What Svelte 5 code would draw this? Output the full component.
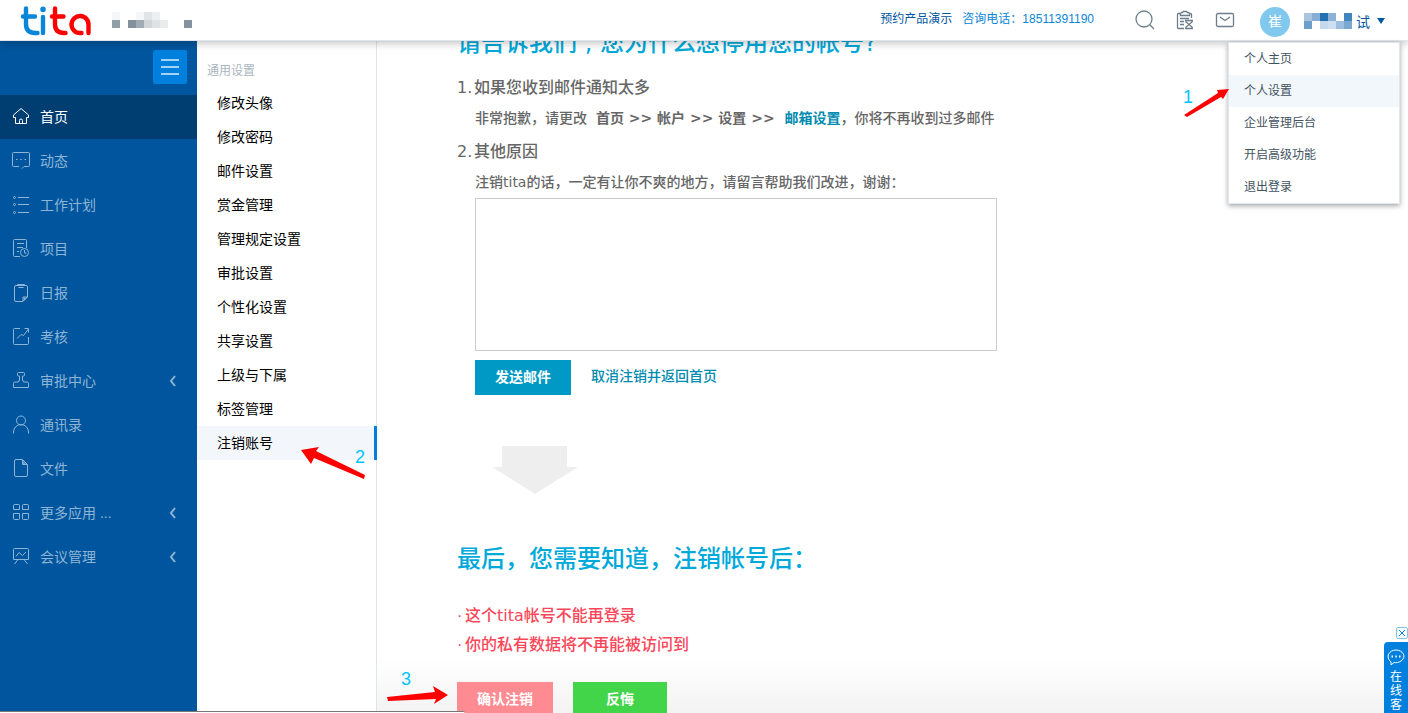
<script>
  // left navigation, icons are stroked paths in a 20x20 box
  const nav = [
    { label: '首页', active: true, icon: 'M10 1.5 2.5 8v2.5h2v6h11v-6h2V8zM8.5 16.5v-3a1.5 1.5 0 0 1 3 0v3' },
    { label: '动态', icon: 'M8 15.5H2.5a1 1 0 0 1-1-1v-12a1 1 0 0 1 1-1h15a1 1 0 0 1 1 1v12a1 1 0 0 1-1 1H13l-2 2M5 8.5h1.5M9.3 8.5h1.5M13.5 8.5H15' },
    { label: '工作计划', icon: 'M2.5 2.5a1 1 0 1 0 2 0 1 1 0 1 0-2 0M2.5 9.5a1 1 0 1 0 2 0 1 1 0 1 0-2 0M2.5 17.5a1 1 0 1 0 2 0 1 1 0 1 0-2 0M7 2.5h11M7 9.5h11M7 17.5h11' },
    { label: '项目', icon: 'M9 17.5H3.5a1 1 0 0 1-1-1v-15a1 1 0 0 1 1-1h11a1 1 0 0 1 1 1V9M6 4.5h7M6 8.5h6M6 12.5h2M9.5 13.5a4 4 0 1 0 8 0 4 4 0 1 0-8 0M13.5 11v3h2' },
    { label: '日报', icon: 'M12 18.5H5a1.5 1.5 0 0 1-1.5-1.5V4A1.5 1.5 0 0 1 5 2.5h10A1.5 1.5 0 0 1 16.5 4v10zM6.5 2.5v-1h7v1M7.5 4.5h5M12 18v-4h4zM13 15h1v1h-1z' },
    { label: '考核', icon: 'M9 1.5H3.5a1 1 0 0 0-1 1v14a1 1 0 0 0 1 1h13a1 1 0 0 0 1-1V10M6 11.5l4-4 2.500 1 5-6.500M13.5 1.5h4v4' },
    { label: '审批中心', more: true, icon: 'M8.5 9.500V5h-1a1 1 0 0 1-1-1V2.500a1 1 0 0 1 1-1h5a1 1 0 0 1 1 1V4a1 1 0 0 1-1 1h-1v4.500M8.500 8.500l-1 2.500H4a1.500 1.500 0 0 0-1.500 1.500v4h15v-4A1.500 1.500 0 0 0 16 11h-3.500l-1-2.500' },
    { label: '通讯录', icon: 'M5.5 5.5a4.500 4.500 0 1 0 9 0 4.500 4.500 0 1 0-9 0M2.5 18.5V17a7.500 7.500 0 0 1 15 0v1.5' },
    { label: '文件', icon: 'M11.5.5H5A1.5 1.5 0 0 0 3.5 2v14A1.5 1.5 0 0 0 5 17.5h10a1.5 1.5 0 0 0 1.5-1.5V5.5zM11.5 1v4.5H16zM12.5 3.5v1h1z' },
    { label: '更多应用 ...', more: true, icon: 'M3.5 1.5h4a1 1 0 0 1 1 1v4h-6v-4a1 1 0 0 1 1-1zM12.5 1.5h4a1 1 0 0 1 1 1v4h-6v-4a1 1 0 0 1 1-1zM2.5 10.5h6v5a1 1 0 0 1-1 1h-4a1 1 0 0 1-1-1zM11.5 10.5h6v5a1 1 0 0 1-1 1h-4a1 1 0 0 1-1-1z' },
    { label: '会议管理', more: true, icon: 'M3.5 1.5h13a1 1 0 0 1 1 1v10h-15v-10a1 1 0 0 1 1-1zM5 9.5l3-4 3.5 3L15 5M7 12.5 3.5 17M13 12.5l3.5 4.5' }
  ];

  const settings = ['修改头像', '修改密码', '邮件设置', '赏金管理', '管理规定设置', '审批设置', '个性化设置', '共享设置', '上级与下属', '标签管理', '注销账号'];
  const userMenu = ['个人主页', '个人设置', '企业管理后台', '开启高级功能', '退出登录'];

  // masked names: [column, row, colour]
  const company = [
    [0, 0, '#f5f6f7'], [3, 0, '#f4f6f7'], [4, 0, '#e0e4e7'], [5, 0, '#eceff1'],
    [0, 1, '#909ea7'], [2, 1, '#82919b'], [3, 1, '#a0abb3'], [4, 1, '#d0d6da'],
    [5, 1, '#dee2e5'], [6, 1, '#e9ecef'], [9, 1, '#84939d']
  ];
  const username = [
    [0, 0, '#a9c5e0'], [1, 0, '#8aaed3'], [2, 0, '#226fb1'], [3, 0, '#8db2d5'], [5, 0, '#4284bc'],
    [0, 1, '#6d9fca'], [2, 1, '#c4d9eb'], [3, 1, '#cddff0'], [4, 1, '#9dbfdd'], [5, 1, '#7ba8d0']
  ];
</script>

<div class="app">
  <header>
    <svg class="logo" width="72" height="32" viewBox="0 0 72 32" fill="none" stroke-width="4.4" stroke-linecap="round">
      <g stroke="#0a86d8">
        <path d="M6 4.5V20q0 9 9 9h2.5M3 12.5h12M23 13v16" />
        <path d="M23 5.3v.2" stroke-width="5.5" />
      </g>
      <path stroke="#f00" d="M35 4.5V20q0 9 9 9h1.5M32 12.5h11.5M68.5 29v-8a8.5 8.5 0 1 0-8.5 8h1.500" />
    </svg>
    <svg class="company" width="80" height="16">
      {#each company as [x, y, fill]}<rect x={x * 8} y={y * 8} width="8" height="8" {fill} />{/each}
    </svg>
    <div class="contact">
      <a class="demo" href="#demo">预约产品演示</a>
      <span>咨询电话：18511391190</span>
    </div>
    <div class="tools">
      <button aria-label="搜索">
        <svg width="20" height="20" viewBox="0 0 20 20"><circle cx="9" cy="9" r="8" /><path d="M14.500 14.500l4.500 4.500" /></svg>
      </button>
      <button aria-label="任务">
        <svg width="20" height="20" viewBox="0 0 20 20"><path d="M9 18.5H3.5a1 1 0 0 1-1-1v-13a1 1 0 0 1 1-1H5M14 3.500h1.500a1 1 0 0 1 1 1V8M5.500 5.500v-2l1-1h1l1-1h3l1 1h1l1 1v2zM5 8.500h9M5 11.500h4M5 14.500h4M10 10.500h8M10 18.500h8M11 10.500v1.500l3 2.500 3-2.500v-1.500M11 18.500V17l3-2.500 3 2.500v1.500" /></svg>
      </button>
      <button aria-label="邮件">
        <svg width="20" height="20" viewBox="0 0 20 20"><rect x="1.5" y="3.5" width="17" height="13" rx="1.5" /><path d="M5 7l5 3.500L15 7" /></svg>
      </button>
    </div>
    <div class="user">
      <span class="avatar">崔</span>
      <button class="name">
        <svg width="48" height="16">
          {#each username as [x, y, fill]}<rect x={x * 8} y={y * 8} width="8" height="8" {fill} />{/each}
        </svg>
        <span>试</span>
        <i class="caret"></i>
      </button>
      <div class="menu">
        {#each userMenu as item, i}
          <a href="#menu" class:hover={i === 1}>{item}</a>
        {/each}
        <div class="note one">
          <b>1</b>
          <svg width="46" height="30" viewBox="0 0 46 30"><path d="M33 2 45 1 39 11 37 9 3 29 0 27 34 5z" /></svg>
        </div>
      </div>
    </div>
  </header>

  <div class="body">
    <aside class="side">
      <button class="toggle" aria-label="收起菜单"><i></i><i></i><i></i></button>
      <nav>
        {#each nav as item}
          <a href="#nav" class:active={item.active}>
            <svg width="20" height="20" viewBox="0 0 20 20"><path d={item.icon} /></svg>
            <span>{item.label}</span>
            {#if item.more}
              <svg class="chevron" width="8" height="12" viewBox="0 0 8 12"><path d="M6 1 2 6l4 5" /></svg>
            {/if}
          </a>
        {/each}
      </nav>
    </aside>

    <aside class="settings">
      <h4>通用设置</h4>
      {#each settings as item, i}
        <a href="#settings" class:current={i === settings.length - 1}>
          {item}
          {#if i === settings.length - 1}
            <span class="note two">
              <b>2</b>
              <svg width="66" height="34" viewBox="0 0 66 34"><path d="M0 4 18 1 15 5 64 29 63 33 13 12 10 18z" /></svg>
            </span>
          {/if}
        </a>
      {/each}
    </aside>

    <main>
      <div class="content">
        <h2>请告诉我们 , 您为什么想停用您的帐号?</h2>
        <h3><span>1.</span>如果您收到邮件通知太多</h3>
        <p>非常抱歉，请更改 &nbsp;<strong>首页 &gt;&gt; 帐户 &gt;&gt; 设置 &gt;&gt; &nbsp;<a href="#mail">邮箱设置</a></strong>，你将不再收到过多邮件</p>
        <h3><span>2.</span>其他原因</h3>
        <p><label for="reason">注销tita的话，一定有让你不爽的地方，请留言帮助我们改进，谢谢：</label></p>
        <textarea id="reason"></textarea>
        <div class="actions send">
          <button class="blue">发送邮件</button>
          <a href="#home">取消注销并返回首页</a>
        </div>
        <svg class="down" width="86" height="48" viewBox="0 0 86 48"><path d="M10 0h65v21h11L43 48 0 21h10z" /></svg>
        <h2>最后，您需要知道，注销帐号后：</h2>
        <ul>
          <li>这个tita帐号不能再登录</li>
          <li>你的私有数据将不再能被访问到</li>
        </ul>
        <div class="actions final">
          <button class="red">确认注销</button>
          <button class="green">反悔</button>
          <div class="note three">
            <b>3</b>
            <svg width="62" height="20" viewBox="0 0 62 20"><path d="M0 12 48 7 46 1 61 10 47 19 49 14 1 16z" /></svg>
          </div>
        </div>
      </div>
    </main>
  </div>

  <div class="chat">
    <button class="close" aria-label="关闭">
      <svg width="10" height="10" viewBox="0 0 10 10"><path d="M2 2l6 6M8 2 2 8" /></svg>
    </button>
    <button class="talk">
      <svg width="18" height="18" viewBox="0 0 18 18"><path d="M4 17v-3C-2 9 2 2 9 2s11 7 5 11c-2 1.5-5 2-7 1.5z" /><path class="dots" d="M4.5 8.5H6M8.3 8.5h1.5M12 8.5h1.5" /></svg>
      <span>在线客</span>
    </button>
  </div>
  <div class="statusbar"></div>
</div>

<style>
  :global(body) {
    margin: 0;
    background: #fff;
  }
  .app {
    height: 100vh;
    display: flex;
    flex-direction: column;
    overflow: hidden;
    font-family: "Liberation Sans", "Noto Sans CJK SC", sans-serif;
    font-size: 14px;
  }
  a {
    text-decoration: none;
  }
  button {
    border: 0;
    padding: 0;
    background: none;
    font: inherit;
    cursor: pointer;
  }
  svg {
    display: block;
    flex: none;
  }

  header {
    position: relative;
    z-index: 2;
    flex: none;
    height: 40px;
    display: flex;
    align-items: center;
    padding: 0 23px 0 20px;
    background: #fff;
    border-bottom: 1px solid #dfe6ee;
    box-shadow: 0 2px 8px rgba(0, 0, 0, 0.25);
  }
  .company {
    margin-left: 20px;
  }
  .contact {
    margin-left: auto;
    display: flex;
    gap: 10px;
    font-size: 12px;
    line-height: 16px;
    padding-bottom: 2px;
    color: #0a86d8;
  }
  .demo {
    color: #00569f;
  }
  .tools {
    display: flex;
    gap: 20px;
    margin: 0 25px 0 41px;
  }
  .tools svg {
    fill: none;
    stroke: #6c7e8a;
    stroke-width: 1.3;
  }
  .user {
    display: flex;
    align-items: center;
    gap: 14px;
  }
  .avatar {
    width: 30px;
    height: 30px;
    margin-top: 3px;
    border-radius: 50%;
    background: #80c8ed;
    color: #fff;
    line-height: 28px;
    text-align: center;
  }
  .name {
    display: flex;
    align-items: center;
    gap: 4px;
    padding-top: 2px;
    color: #00569f;
  }
  .caret {
    margin-left: 3px;
    border: 4px solid transparent;
    border-top: 6px solid #00569f;
    border-bottom: 0;
  }
  .menu {
    position: absolute;
    top: 42px;
    right: 8px;
    width: 170px;
    background: #fff;
    border: 1px solid #dfe6ee;
    box-shadow: 0 2px 5px rgba(0, 0, 0, 0.35);
  }
  .menu a {
    display: block;
    padding-left: 15px;
    font-size: 12px;
    line-height: 32px;
    color: #43525f;
  }
  .menu a.hover {
    background: #f2f7fb;
  }

  .body {
    flex: 1;
    min-height: 0;
    display: flex;
  }
  .side {
    flex: none;
    width: 197px;
    background: #00569e;
  }
  .toggle {
    width: 34px;
    height: 34px;
    margin: 9px 10px 11px auto;
    display: flex;
    flex-direction: column;
    align-items: center;
    justify-content: center;
    gap: 5px;
    border-radius: 2px;
    background: #0080de;
  }
  .toggle i {
    width: 18px;
    height: 2px;
    background: #a5d3f4;
  }
  nav a {
    display: flex;
    align-items: center;
    gap: 9px;
    height: 44px;
    padding: 0 20px 0 11px;
    line-height: 44px;
    color: #8fb5d6;
  }
  nav a.active {
    background: #003e71;
    color: #fff;
  }
  nav svg {
    fill: none;
    stroke: currentColor;
  }
  .chevron {
    margin-left: auto;
    stroke-width: 2;
  }

  .settings {
    flex: none;
    width: 179px;
    border-right: 1px solid #e0e5eb;
  }
  .settings h4 {
    margin: 0;
    padding: 20px 10px 5px;
    font-size: 12px;
    line-height: 20px;
    font-weight: normal;
    color: #a9b5bf;
  }
  .settings a {
    position: relative;
    display: block;
    padding-left: 20px;
    line-height: 34px;
    color: #000;
  }
  .settings a.current {
    margin-right: -1px;
    background: #f3f7fb;
    border-right: 3px solid #0080de;
  }

  main {
    flex: 1;
    min-width: 0;
    overflow: hidden;
    background: linear-gradient(transparent 92%, #f3f3f3);
    color: #666;
    font-family: "DejaVu Sans", "Noto Sans CJK SC", sans-serif;
    font-weight: 500;
  }
  /* page is scrolled a little, the first title slides under the header */
  .content {
    margin-top: -16px;
    padding-left: 80px;
  }
  h2 {
    margin: 0;
    font-size: 24px;
    line-height: 36px;
    font-weight: 500;
    color: #00a9da;
  }
  h3 {
    display: flex;
    margin: 11px 0 7px;
    font-size: 16px;
    line-height: 24px;
    font-weight: 500;
  }
  h2 + h3 {
    margin-top: 15px;
  }
  h3 span {
    width: 17px;
  }
  p {
    margin: 0 0 0 18px;
    line-height: 22px;
  }
  p a, .send a {
    color: #008bb0;
  }
  textarea {
    display: block;
    box-sizing: border-box;
    width: 522px;
    max-width: 90%;
    height: 153px;
    margin: 5px 0 9px 18px;
    border: 1px solid #ccc;
    background: #fff;
    resize: none;
  }
  .actions {
    position: relative;
    display: flex;
    align-items: center;
    gap: 20px;
    line-height: 35px;
  }
  .send {
    margin-left: 18px;
  }
  .send a {
    line-height: 32px;
    padding-bottom: 3px;
  }
  .actions button {
    padding: 0 20px;
    line-height: 35px;
    font-weight: bold;
    color: #fff;
  }
  .actions .blue {
    background: #0098c4;
  }
  .actions .red {
    background: #ff8b92;
  }
  .actions .green {
    padding: 0 33px;
    background: #43d549;
  }
  .down {
    margin: 51px 0 47px 35px;
    fill: #eee;
  }
  ul {
    margin: 24px 0 23px;
    padding: 0;
    list-style: none;
    font-size: 16px;
    line-height: 29px;
    color: #fa4659;
  }
  li {
    display: flex;
  }
  li::before {
    content: "·";
    width: 8px;
    font-family: "Liberation Sans", sans-serif;
  }

  /* numbered hints */
  .note {
    position: absolute;
    z-index: 1;
  }
  .note b {
    position: absolute;
    font: 18px/20px "Liberation Sans", sans-serif;
    color: #00c4ff;
  }
  .note svg {
    fill: #f00;
  }
  .one {
    left: -45px;
    top: 45px;
  }
  .one b {
    left: -1px;
    top: -1px;
  }
  .two {
    left: 104px;
    top: 20px;
  }
  .two b {
    left: 54px;
    top: 1px;
  }
  .three {
    left: -70px;
    top: 3px;
  }
  .three b {
    left: 14px;
    top: -16px;
  }

  .chat {
    position: fixed;
    right: 0;
    bottom: 0;
    z-index: 3;
    display: flex;
    flex-direction: column;
    align-items: flex-end;
    gap: 3px;
  }
  .close {
    border: 1px solid #80c3ee;
    border-radius: 2px;
    background: #fff;
  }
  .chat svg {
    fill: none;
    stroke: #0080de;
  }
  .talk {
    width: 24px;
    height: 71px;
    display: flex;
    flex-direction: column;
    align-items: center;
    gap: 4px;
    padding-top: 6px;
    box-sizing: border-box;
    border-radius: 4px 0 0 0;
    background: #0080de;
    color: #fff;
    font-size: 12px;
    line-height: 14px;
  }
  .talk svg {
    stroke: #fff;
  }
  .talk span {
    width: 12px;
  }
  .talk .dots {
    stroke-width: 2;
  }
  .statusbar {
    position: fixed;
    left: 0;
    bottom: 0;
    z-index: 3;
    width: 33%;
    height: 1px;
    border-top: 1px solid #777;
    border-radius: 0 3px 0 0;
    background: #fff;
  }
</style>
